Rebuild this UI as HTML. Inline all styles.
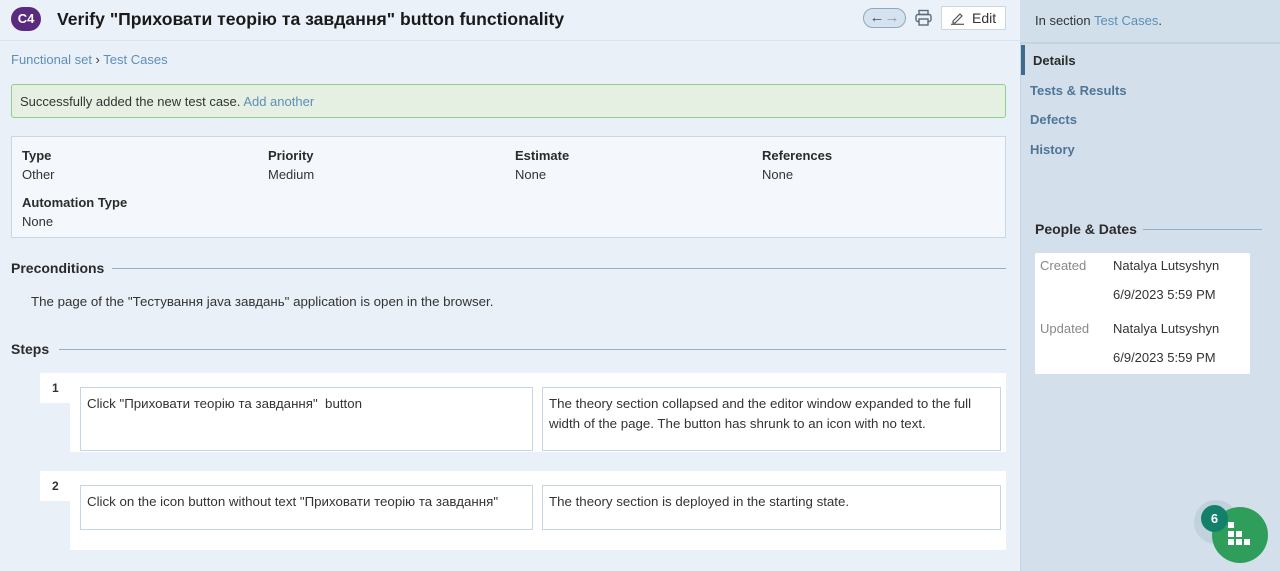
<!DOCTYPE html>
<html><head><meta charset="utf-8"><style>
*{margin:0;padding:0;box-sizing:border-box}
body{width:1280px;height:571px;overflow:hidden;background:#e9f0f7;font-family:"Liberation Sans","Noto Sans CJK SC",sans-serif;font-size:13px;color:#333;position:relative}
.a{position:absolute}
.lnk{color:#5d8fb8}
.b{font-weight:bold;color:#2b2b2b}
.cell{position:absolute;background:#fff;border:1px solid #c5d5e5;padding:6px 6px;font-size:13.3px;line-height:20px;color:#333}
.hr{position:absolute;height:1px;background:#8fb0cc}
</style></head><body>
<div class="a" style="left:0;top:0;width:1020px;height:41px;border-bottom:1px solid #d8e2ec;background:#eaf1f8"></div>
<div class="a" style="left:11px;top:7px;width:30px;height:24px;border-radius:12px;background:#5a2a7e;color:#fff;font-size:13px;font-weight:bold;text-align:center;line-height:24px">C4</div>
<div class="a" style="left:57px;top:7px;font-size:17.6px;font-weight:bold;color:#1a1a1a;line-height:24px">Verify "Приховати теорію та завдання" button functionality</div>
<div class="a" style="left:863px;top:8px;width:43px;height:20px;border:1px solid #8aa9c4;border-radius:10px;background:#d6e3ef;font-size:15px;line-height:17px;text-align:center;color:#34536e;font-weight:bold">←<span style="color:#8a9fb3">→</span></div>
<svg class="a" style="left:914px;top:9px" width="19" height="18" viewBox="0 0 19 18"><rect x="5" y="1.5" width="9" height="4" fill="none" stroke="#5a6b7a" stroke-width="1.4"/><rect x="2" y="5.5" width="15" height="7" rx="2" fill="none" stroke="#5a6b7a" stroke-width="1.4"/><rect x="5" y="10" width="9" height="6" fill="#eaf1f8" stroke="#5a6b7a" stroke-width="1.4"/></svg>
<div class="a" style="left:941px;top:6px;width:65px;height:24px;border:1px solid #ccd6e0;background:#fff;font-size:14px;line-height:22px;color:#333;padding-left:30px">Edit</div>
<svg class="a" style="left:950px;top:11px" width="16" height="14" viewBox="0 0 16 14"><path d="M3 10 L10 3 L12 5 L5 12 L3 12 Z" fill="none" stroke="#555" stroke-width="1.2"/><path d="M1 13.3 H14" stroke="#555" stroke-width="1.2"/></svg>
<div class="a lnk" style="left:11px;top:52px;font-size:13px">Functional set <span style="color:#333">›</span> Test Cases</div>
<div class="a" style="left:11px;top:84px;width:995px;height:34px;background:#e5f0e2;border:1px solid #8fcf8c;border-radius:3px;padding:8px 8px;font-size:13px;line-height:17px">Successfully added the new test case. <span class="lnk">Add another</span></div>
<div class="a" style="left:11px;top:136px;width:995px;height:102px;background:#f4f8fc;border:1px solid #c9d7e5"></div>
<div class="a" style="left:22px;top:146px;line-height:19px"><div class="b">Type</div><div>Other</div></div>
<div class="a" style="left:268px;top:146px;line-height:19px"><div class="b">Priority</div><div>Medium</div></div>
<div class="a" style="left:515px;top:146px;line-height:19px"><div class="b">Estimate</div><div>None</div></div>
<div class="a" style="left:762px;top:146px;line-height:19px"><div class="b">References</div><div>None</div></div>
<div class="a" style="left:22px;top:193px;line-height:19px"><div class="b">Automation Type</div><div>None</div></div>
<div class="a b" style="left:11px;top:260px;font-size:14px">Preconditions</div>
<div class="hr" style="left:112px;top:268px;width:894px"></div>
<div class="a" style="left:31px;top:294px;font-size:13.3px">The page of the "Тестування java завдань" application is open in the browser.</div>
<div class="a b" style="left:11px;top:341px;font-size:14px">Steps</div>
<div class="hr" style="left:59px;top:349px;width:947px"></div>
<div class="a" style="left:70px;top:373px;width:936px;height:177px;background:#fff"></div>
<div class="a" style="left:40px;top:373px;width:30px;height:30px;background:#fff;font-weight:bold;padding:8px 0 0 12px;font-size:12px">1</div>
<div class="a" style="left:40px;top:471px;width:30px;height:30px;background:#fff;font-weight:bold;padding:8px 0 0 12px;font-size:12px">2</div>
<div class="a" style="left:70px;top:452px;width:936px;height:19px;background:#e9f0f7"></div>
<div class="a" style="left:40px;top:452px;width:30px;height:19px;background:#e9f0f7"></div>
<div class="cell" style="left:80px;top:387px;width:453px;height:64px">Click "Приховати теорію та завдання"&nbsp; button</div>
<div class="cell" style="left:542px;top:387px;width:459px;height:64px">The theory section collapsed and the editor window expanded to the full width of the page. The button has shrunk to an icon with no text.</div>
<div class="cell" style="left:80px;top:485px;width:453px;height:45px">Click on the icon button without text "Приховати теорію та завдання"</div>
<div class="cell" style="left:542px;top:485px;width:459px;height:45px">The theory section is deployed in the starting state.</div>
<div class="a" style="left:1020px;top:0;width:260px;height:571px;background:#d3e0ec;border-left:1px solid #c5d3e0"></div>
<div class="a" style="left:1020px;top:0;width:260px;height:44px;background:#d1dfeb;border-bottom:2px solid #c3d3e2"></div>
<div class="a" style="left:1035px;top:13px">In section <span class="lnk">Test Cases</span>.</div>
<div class="a" style="left:1021px;top:45px;width:4px;height:30px;background:#3d6a8e"></div>
<div class="a b" style="left:1033px;top:53px">Details</div>
<div class="a" style="left:1030px;top:83px;font-weight:bold;color:#4f7597">Tests &amp; Results</div>
<div class="a" style="left:1030px;top:112px;font-weight:bold;color:#4f7597">Defects</div>
<div class="a" style="left:1030px;top:142px;font-weight:bold;color:#4f7597">History</div>
<div class="a b" style="left:1035px;top:221px;font-size:14px">People &amp; Dates</div>
<div class="hr" style="left:1143px;top:229px;width:119px"></div>
<div class="a" style="left:1035px;top:253px;width:215px;height:121px;background:#fff;border-radius:2px"></div>
<div class="a" style="left:1040px;top:256px;color:#888;line-height:20px">Created</div>
<div class="a" style="left:1113px;top:256px;line-height:20px">Natalya Lutsyshyn</div>
<div class="a" style="left:1113px;top:285px;line-height:20px">6/9/2023 5:59 PM</div>
<div class="a" style="left:1040px;top:319px;color:#888;line-height:20px">Updated</div>
<div class="a" style="left:1113px;top:319px;line-height:20px">Natalya Lutsyshyn</div>
<div class="a" style="left:1113px;top:348px;line-height:20px">6/9/2023 5:59 PM</div>
<div class="a" style="left:1194px;top:500px;width:44px;height:44px;border-radius:50%;background:#c0d2dc"></div>
<div class="a" style="left:1212px;top:507px;width:56px;height:56px;border-radius:50%;background:#2f9e5a"></div>
<div class="a" style="left:1201px;top:505px;width:27px;height:27px;border-radius:50%;background:#12806a;color:#fff;font-size:13px;font-weight:bold;text-align:center;line-height:27px">6</div>
<svg class="a" style="left:1228px;top:522px" width="26" height="26" viewBox="0 0 26 26" fill="#fff"><rect x="0" y="0" width="6" height="6"/><rect x="0" y="9" width="6" height="6"/><rect x="8" y="9" width="6" height="6"/><rect x="0" y="17" width="6" height="6"/><rect x="8" y="17" width="6" height="6"/><rect x="16" y="17" width="6" height="6"/></svg>
</body></html>
